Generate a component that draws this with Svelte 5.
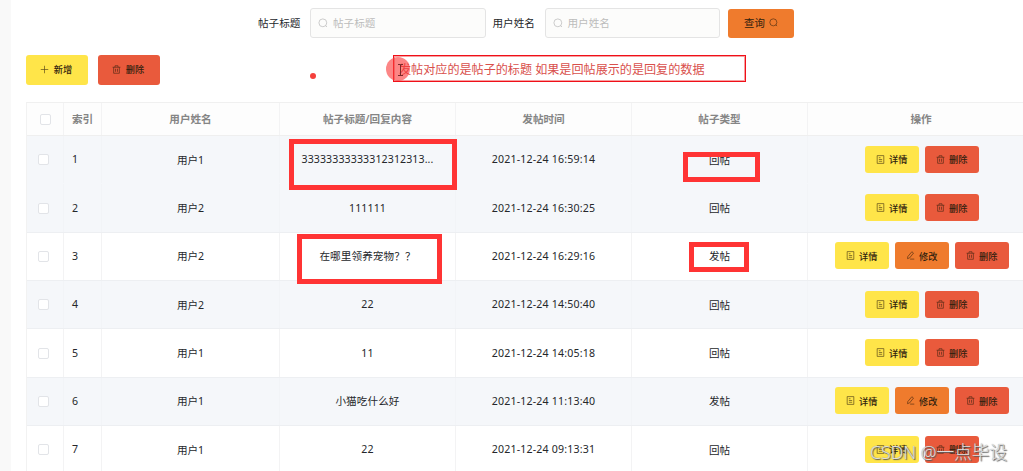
<script lang="ts">
    interface Post {
        user: string;
        content: string;
        time: string;
        type: string;
        editable?: boolean;
        shaded?: boolean;
    }

    const columns = ['索引', '用户姓名', '帖子标题/回复内容', '发帖时间', '帖子类型', '操作'];

    const posts: Post[] = [
        { user: '用户1', content: '33333333333312312313...', time: '2021-12-24 16:59:14', type: '回帖', shaded: true },
        { user: '用户2', content: '111111', time: '2021-12-24 16:30:25', type: '回帖', shaded: true },
        { user: '用户2', content: '在哪里领养宠物？？', time: '2021-12-24 16:29:16', type: '发帖', editable: true },
        { user: '用户2', content: '22', time: '2021-12-24 14:50:40', type: '回帖', shaded: true },
        { user: '用户1', content: '11', time: '2021-12-24 14:05:18', type: '回帖' },
        { user: '用户1', content: '小猫吃什么好', time: '2021-12-24 11:13:40', type: '发帖', editable: true, shaded: true },
        { user: '用户1', content: '22', time: '2021-12-24 09:13:31', type: '回帖' }
    ];
</script>

{#snippet icon(name: string)}
    <svg class="icon" viewBox="0 0 12 12" fill="none" stroke="currentColor" stroke-width="0.9">
        {#if name === 'search'}
            <circle cx="5.8" cy="5.8" r="4.7" />
            <path d="M9 9 10.8 10.8" />
        {:else if name === 'plus'}
            <path d="M6 1V11M1 6H11" />
        {:else if name === 'trash'}
            <path d="M0.8 3H11.2M4 3V1H8V3M2.2 3V11H9.8V3M4.7 5V9M7.3 5V9" />
        {:else if name === 'detail'}
            <path d="M1.6 0.8H10.4V11.2H1.6ZM3.8 3.6H6M3.8 6H8.2M3.8 8.4H8.2" />
        {:else if name === 'edit'}
            <path d="M7.8 1 10 2.8 4.8 9.2 2 10.2 2.4 7.4ZM5.5 10.8H11" />
        {/if}
    </svg>
{/snippet}

<div class="page">
    <div class="sidebar"></div>
    <main>
        <form class="search">
            <span class="label">帖子标题</span>
            <div class="input">{@render icon('search')}<span>帖子标题</span></div>
            <span class="label second">用户姓名</span>
            <div class="input">{@render icon('search')}<span>用户姓名</span></div>
            <button type="button" class="btn query">查询 {@render icon('search')}</button>
        </form>

        <div class="toolbar">
            <button class="btn yellow">{@render icon('plus')}新增</button>
            <button class="btn red">{@render icon('trash')}删除</button>
        </div>

        <div class="table">
            <div class="row head">
                <div class="cell check"><i class="checkbox"></i></div>
                {#each columns as column, i}
                    <div class="cell" class:index={i === 0}>{column}</div>
                {/each}
            </div>
            {#each posts as post, i}
                <div class="row" class:shaded={post.shaded} class:first={i === 0}>
                    <div class="cell check"><i class="checkbox"></i></div>
                    <div class="cell index">{i + 1}</div>
                    <div class="cell">{post.user}</div>
                    <div class="cell content">{post.content}</div>
                    <div class="cell time">{post.time}</div>
                    <div class="cell">{post.type}</div>
                    <div class="cell actions">
                        <button class="btn yellow">{@render icon('detail')}详情</button>
                        {#if post.editable}
                            <button class="btn orange">{@render icon('edit')}修改</button>
                        {/if}
                        <button class="btn red">{@render icon('trash')}删除</button>
                    </div>
                </div>
            {/each}
        </div>
    </main>

    <!-- annotations -->
    <div class="note">发帖对应的是帖子的标题 如果是回帖展示的是回复的数据</div>
    <div class="pointer">
        <svg viewBox="0 0 24 24" fill="none" stroke="#7d2929" stroke-width="1"><path d="M12 7.5H14.5M17 7.5H14.5V18.5M12 18.5H17" /></svg>
    </div>
    <div class="dot"></div>
    <div class="mark content-1"></div>
    <div class="mark content-3"></div>
    <div class="mark type-1"></div>
    <div class="mark type-3"></div>
    <div class="watermark">CSDN @一点毕设</div>
</div>

<style>
    :global(body) {
        margin: 0;
        overflow: hidden;
    }

    .page {
        position: relative;
        display: flex;
        width: 1023px;
        height: 471px;
        overflow: hidden;
        background: #fff;
        color: #25272b;
        font-family: 'Noto Sans', 'Noto Sans CJK SC', sans-serif;
        font-size: 10.6px;
    }

    .sidebar {
        flex: 0 0 11px;
        background: #f9f9f9;
    }

    main {
        flex: 0 0 1024px;
        padding: 8px 0 0 14.5px;
        box-sizing: border-box;
    }

    .search {
        display: flex;
        align-items: center;
        height: 30px;
        padding-left: 232.5px;
    }

    .label {
        width: 43px;
        margin-right: 9px;
        padding-bottom: 1px;
        white-space: nowrap;
    }

    .label.second {
        margin-left: 7px;
    }

    .input {
        display: flex;
        align-items: center;
        gap: 5px;
        width: 175.5px;
        height: 30px;
        padding-left: 7px;
        box-sizing: border-box;
        border: 1px solid #e4e4e4;
        border-radius: 3px;
        background: #fcfcfb;
        color: #bcbcbc;
    }

    .input span {
        padding-bottom: 1px;
    }

    .icon {
        flex: none;
        width: 10px;
        height: 10px;
    }

    .btn {
        display: flex;
        align-items: center;
        justify-content: center;
        gap: 4px;
        width: 54px;
        height: 27px;
        padding: 0;
        border: 0;
        border-radius: 3px;
        color: #30200e;
        font-family: inherit;
        font-size: 9.2px;
        font-weight: 500;
    }

    .btn .icon {
        width: 9px;
        height: 9px;
        opacity: 0.8;
    }

    .yellow {
        background: #ffe549;
    }

    .orange,
    .query {
        background: #ef7b2d;
    }

    .red {
        background: #e95a3c;
    }

    .query {
        width: 66px;
        height: 29px;
        margin-left: 8px;
        padding-bottom: 1px;
        font-size: 10.4px;
        font-weight: 400;
    }

    .toolbar {
        display: flex;
        gap: 10px;
        margin-top: 17px;
    }

    .toolbar .btn {
        width: 62px;
        height: 29.5px;
        gap: 5px;
        padding: 0 1px 1px 0;
    }

    .table {
        width: 1009px;
        margin-top: 17.5px;
        border-top: 1px solid #f0f0f0;
        border-left: 1px solid #f2f2f2;
    }

    .row {
        display: grid;
        grid-template-columns: 37.5px 38px 178px 176px 176px 176px 227px;
        height: 48.35px;
        box-sizing: border-box;
        border-bottom: 1px solid #edeff2;
    }

    .head {
        height: 33px;
        background: #fdfdfd;
        color: #858585;
        font-weight: 600;
        border-color: #efefef;
    }

    .shaded {
        background: #f5f7fa;
    }

    .first {
        border-bottom-color: #f5f7fa;
    }

    .cell {
        display: flex;
        align-items: center;
        justify-content: center;
        padding-bottom: 1px;
        border-right: 1px solid #f3f3f4;
        white-space: nowrap;
    }

    .shaded .cell {
        border-color: #f2f4f7;
    }

    .index {
        justify-content: flex-start;
        padding-left: 8px;
    }

    .content {
        letter-spacing: 0.1px;
    }

    .time {
        letter-spacing: 0.17px;
    }

    .check {
        padding: 0 2px 0 0;
    }

    .checkbox {
        width: 9px;
        height: 9px;
        border: 1px solid #e2e4e8;
        border-radius: 2px;
        background: #fff;
    }

    .head .checkbox {
        margin-left: 3px;
    }

    .actions {
        gap: 6px;
        padding-left: 1.5px;
    }

    .note {
        position: absolute;
        left: 393px;
        top: 55px;
        width: 353px;
        height: 27px;
        padding-left: 5px;
        box-sizing: border-box;
        border: 1px solid #f00f18;
        box-shadow: inset 0 0 0 1px #f6a0a0;
        color: #d9504c;
        font-size: 12.1px;
        line-height: 27px;
        white-space: nowrap;
    }

    .pointer {
        position: absolute;
        left: 386px;
        top: 57px;
        width: 24px;
        height: 24px;
        border-radius: 50%;
        background: rgba(250, 60, 60, 0.62);
    }

    .dot {
        position: absolute;
        left: 310px;
        top: 73px;
        width: 6px;
        height: 6px;
        border-radius: 50%;
        background: #f5403c;
    }

    .mark {
        position: absolute;
        box-sizing: border-box;
        border: 5px solid #ff3434;
    }

    .content-1 {
        left: 289px;
        top: 139px;
        width: 168px;
        height: 51px;
    }

    .content-3 {
        left: 297px;
        top: 234px;
        width: 145px;
        height: 50px;
    }

    .type-1 {
        left: 683px;
        top: 152px;
        width: 77px;
        height: 30px;
    }

    .type-3 {
        left: 689px;
        top: 242px;
        width: 60px;
        height: 30px;
    }

    .watermark {
        position: absolute;
        left: 870px;
        top: 440px;
        color: rgba(235, 235, 235, 0.9);
        font-size: 17.7px;
        font-weight: 300;
        line-height: 24px;
        text-shadow: 1px 1px 1px #555, 0 0 1px #888;
        white-space: nowrap;
    }
</style>
